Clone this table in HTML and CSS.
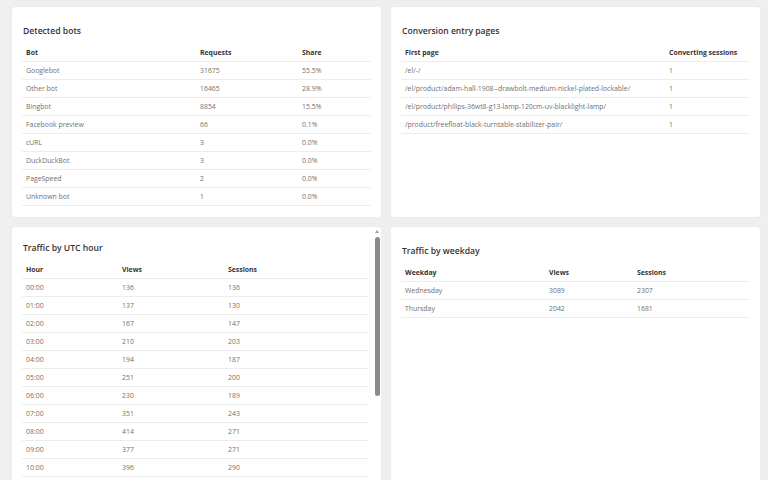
FILE: index.html
```
<!DOCTYPE html>
<html>
    <head>
        <meta charset="utf-8">
        <title>Traffic report</title>
        <link rel="stylesheet" href="styles.css">
    </head>
    <body>
        <div class="dash">
            <section class="card">
                <h2 class="card-title">Detected bots</h2>
                <table class="data">
                    <colgroup><col class="w-174"><col class="w-102"><col></colgroup>
                    <thead>
                        <tr><th>Bot</th><th>Requests</th><th>Share</th></tr>
                    </thead>
                    <tbody>
                        <tr><td>Googlebot</td><td>31675</td><td>55.5%</td></tr>
                        <tr><td>Other bot</td><td>16465</td><td>28.9%</td></tr>
                        <tr><td>Bingbot</td><td>8854</td><td>15.5%</td></tr>
                        <tr><td>Facebook preview</td><td>66</td><td>0.1%</td></tr>
                        <tr><td>cURL</td><td>3</td><td>0.0%</td></tr>
                        <tr><td>DuckDuckBot</td><td>3</td><td>0.0%</td></tr>
                        <tr><td>PageSpeed</td><td>2</td><td>0.0%</td></tr>
                        <tr><td>Unknown bot</td><td>1</td><td>0.0%</td></tr>
                    </tbody>
                </table>
            </section>

            <section class="card">
                <h2 class="card-title">Conversion entry pages</h2>
                <table class="data">
                    <colgroup><col class="w-264"><col></colgroup>
                    <thead>
                        <tr><th>First page</th><th>Converting sessions</th></tr>
                    </thead>
                    <tbody>
                        <tr><td>/el/-/</td><td>1</td></tr>
                        <tr><td>/el/product/adam-hall-1908--drawbolt-medium-nickel-plated-lockable/</td><td>1</td></tr>
                        <tr><td>/el/product/philips-36wt8-g13-lamp-120cm-uv-blacklight-lamp/</td><td>1</td></tr>
                        <tr><td>/product/freefloat-black-turntable-stabilizer-pair/</td><td>1</td></tr>
                    </tbody>
                </table>
            </section>

            <section class="card hours">
                <div class="hours-body">
                    <h2 class="card-title">Traffic by UTC hour</h2>
                    <table class="data">
                        <colgroup><col class="w-96"><col class="w-106"><col></colgroup>
                        <thead>
                            <tr><th>Hour</th><th>Views</th><th>Sessions</th></tr>
                        </thead>
                        <tbody>
                            <tr><td>00:00</td><td>136</td><td>136</td></tr>
                            <tr><td>01:00</td><td>137</td><td>130</td></tr>
                            <tr><td>02:00</td><td>167</td><td>147</td></tr>
                            <tr><td>03:00</td><td>210</td><td>203</td></tr>
                            <tr><td>04:00</td><td>194</td><td>187</td></tr>
                            <tr><td>05:00</td><td>251</td><td>200</td></tr>
                            <tr><td>06:00</td><td>230</td><td>189</td></tr>
                            <tr><td>07:00</td><td>351</td><td>243</td></tr>
                            <tr><td>08:00</td><td>414</td><td>271</td></tr>
                            <tr><td>09:00</td><td>377</td><td>271</td></tr>
                            <tr><td>10:00</td><td>396</td><td>290</td></tr>
                            <tr><td>11:00</td><td>402</td><td>287</td></tr>
                            <tr><td>12:00</td><td>388</td><td>276</td></tr>
                            <tr><td>13:00</td><td>365</td><td>262</td></tr>
                        </tbody>
                    </table>
                </div>
                <div class="rail">
                    <span class="rail-up"></span>
                    <span class="rail-thumb"></span>
                </div>
            </section>

            <section class="card">
                <h2 class="card-title">Traffic by weekday</h2>
                <table class="data">
                    <colgroup><col class="w-144"><col class="w-88"><col></colgroup>
                    <thead>
                        <tr><th>Weekday</th><th>Views</th><th>Sessions</th></tr>
                    </thead>
                    <tbody>
                        <tr><td>Wednesday</td><td>3089</td><td>2307</td></tr>
                        <tr><td>Thursday</td><td>2042</td><td>1681</td></tr>
                    </tbody>
                </table>
            </section>
        </div>
    </body>
</html>
```

FILE: styles.css
```
html, body{
    margin: 0;
    height: 100%;
    overflow: hidden;
}
body{
    background-color: #efeef1;
    font-family: "Open Sans", "Noto Sans", sans-serif;
}
.dash{
    display: grid;
    grid-template-columns: 369px 369px;
    grid-template-rows: auto 283px;
    gap: 10px;
    padding: 7px 8px 0 12px;
}
.card{
    background-color: #fff;
    border-radius: 3px;
    box-shadow: 0 0 2px rgba(0, 0, 0, 0.05);
    padding: 17px 10px 11px 10px;
    box-sizing: border-box;
}
.card-title{
    margin: 0 0 6px 1px;
    font-size: 8.6px;
    line-height: 14px;
    font-weight: 600;
    color: #333;
}
.data{
    width: 100%;
    border-collapse: collapse;
    table-layout: fixed;
    font-size: 6.9px;
}
.data th,
.data td{
    text-align: left;
    padding: 0 4px;
    height: 17px;
    border-bottom: 1px solid #ededed;
    white-space: nowrap;
}
.data th{
    font-weight: 700;
    color: #333;
}
.data td{
    color: #707070;
}
.w-174{ width: 174px; }
.w-102{ width: 102px; }
.w-264{ width: 264px; }
.w-96{ width: 96px; }
.w-106{ width: 106px; }
.w-144{ width: 144px; }
.w-88{ width: 88px; }

/* hour card: content is scrolled a little and has its own bar */
.hours{
    display: flex;
    padding: 0;
    overflow: hidden;
}
.hours-body{
    flex: 1;
    min-width: 0;
    padding: 14px 5px 0 10px;
    overflow: hidden;
}
.rail{
    width: 8px;
    display: flex;
    flex-direction: column;
    align-items: center;
}
.rail-up{
    margin-top: 3px;
    width: 0;
    height: 0;
    border-left: 2.5px solid transparent;
    border-right: 2.5px solid transparent;
    border-bottom: 3px solid #a0a0a0;
}
.rail-up + .rail-thumb{
    margin-top: 4px;
}
.rail-thumb{
    width: 5px;
    height: 159px;
    border-radius: 3px;
    background-color: #8a8a8a;
}
```
